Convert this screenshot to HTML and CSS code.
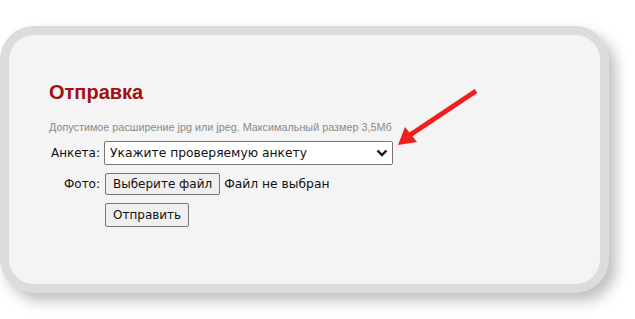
FILE: index.html
```html
<!DOCTYPE html>
<html lang="ru">
<head>
<meta charset="utf-8">
<link rel="stylesheet" href="styles.css">
</head>
<body>
<div class="page">
  <div class="card">
    <h2 class="title">Отправка</h2>
    <p class="hint">Допустимое расширение jpg или jpeg. Максимальный размер 3,5Мб</p>
    <form class="form">
      <label class="lbl">Анкета:</label>
      <div class="select-wrap">
        <select class="select"><option>Укажите проверяемую анкету</option></select>
        <svg class="chev" width="12" height="8" viewBox="0 0 12 8"><path d="M1.5 1.5 L6 6 L10.5 1.5" fill="none" stroke="#111" stroke-width="2.4"/></svg>
      </div>
      <label class="lbl">Фото:</label>
      <div class="file-row"><button type="button" class="btn">Выберите файл</button><span class="nofile">Файл не выбран</span></div>
      <span></span>
      <div><button type="button" class="btn btn-submit">Отправить</button></div>
    </form>
  </div>
  <svg class="arrow" width="100" height="70" viewBox="0 0 100 70">
    <path d="M80 5 L14 49" stroke="#f21d1d" stroke-width="5" stroke-linecap="butt"/>
    <path d="M2 59 L9 41 L21 56 Z" fill="#f21d1d"/>
  </svg>
</div>
</body>
</html>
```
FILE: styles.css
```css
html, body { margin: 0; padding: 0; background: #fff; }
.page { position: relative; width: 635px; height: 319px; padding-top: 26px; box-sizing: border-box; }
.card {
  box-sizing: border-box;
  width: 609px;
  height: 267px;
  border: 9px solid #dcdcdc;
  border-radius: 34px;
  background: #f4f4f4;
  box-shadow: 7px 8px 14px rgba(0,0,0,0.25);
  padding: 46px 0 0 40px;
}
.title {
  margin: 0;
  font-family: "Liberation Sans", Arial, sans-serif;
  font-weight: bold;
  font-size: 20px;
  line-height: 22px;
  color: #a3100f;
}
.hint {
  margin: 18px 0 0;
  font-family: "Liberation Sans", Arial, sans-serif;
  font-size: 10.8px;
  line-height: 12px;
  color: #8a8a8a;
}
.form {
  margin-top: 8px;
  display: grid;
  grid-template-columns: 51px auto;
  column-gap: 4px;
  row-gap: 8px;
  align-items: center;
  font-family: "DejaVu Sans", Verdana, sans-serif;
  font-size: 12px;
  color: #111;
}
.lbl { text-align: right; white-space: nowrap; }
.select-wrap { position: relative; width: 289px; height: 24px; }
.select {
  -webkit-appearance: none; appearance: none;
  box-sizing: border-box;
  width: 289px; height: 24px;
  border: 1px solid #767676;
  border-radius: 2px;
  background: #fff;
  font-family: "DejaVu Sans", Verdana, sans-serif;
  font-size: 12.3px;
  color: #111;
  padding: 0 0 0 5px;
  margin: 0;
}
.chev { position: absolute; right: 5px; top: 8px; }
.file-row { display: flex; align-items: center; gap: 4px; }
.btn {
  box-sizing: border-box;
  height: 22px;
  padding: 0 7px;
  border: 1px solid #767676;
  border-radius: 2px;
  background: #efefef;
  font-family: "DejaVu Sans", Verdana, sans-serif;
  font-size: 12px;
  color: #111;
  margin: 0;
}
.btn-submit { height: 24px; margin-left: 1px; }
.file-row .btn { margin-left: 1px; }
.nofile { font-size: 12.3px; }
.arrow { position: absolute; left: 396px; top: 86px; }
```
